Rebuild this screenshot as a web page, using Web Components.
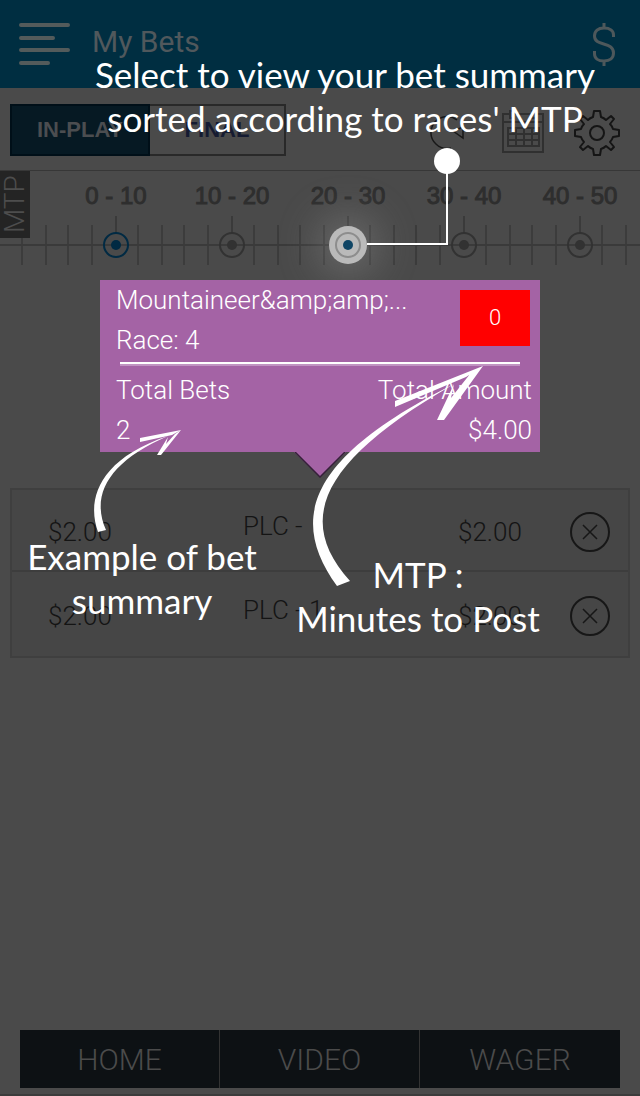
<!DOCTYPE html>
<html lang="en">
<head>
<meta charset="utf-8">
<meta name="viewport" content="width=device-width, initial-scale=1">
<title>My Bets</title>
<style>
  body { margin: 0; background: #4a4a4a; font-family: Roboto, "Liberation Sans", sans-serif; font-weight: 300; }
</style>
</head>
<body>
<bets-screen></bets-screen>
<script>
function define(name, html, setup) {
  const template = document.createElement('template');
  template.innerHTML = html;
  customElements.define(name, class extends HTMLElement {
    connectedCallback() {
      if (this.shadowRoot) return;
      this.attachShadow({ mode: 'open' }).append(template.content.cloneNode(true));
      if (setup) setup(this, this.shadowRoot);
    }
  });
}

define('app-header', `
<style>
  :host { display: flex; align-items: center; height: 88px; box-sizing: border-box; padding: 0 22px 0 18px; background: #002e41; }
  button { display: flex; padding: 0; border: 0; background: none; }
  h1 { flex: 1; margin: 0 0 4px 20px; font-size: 30px; line-height: 36px; font-weight: 400; color: #50585c; }
</style>
<button aria-label="Menu"><svg width="54" height="48" fill="none" stroke="#535b5b" stroke-width="4" stroke-linecap="round"><path d="M3 5H50M3 18H35M3 30H50M3 43H30"/></svg></button>
<h1><slot></slot></h1>
<button aria-label="Balance"><svg width="26" height="48" fill="none" stroke="#4e585b" stroke-width="3"><path d="M12 3V8M12 41V46M21.500 17V15C21.500 11 18 8 12 8S2.500 11 2.500 16C2.500 27 21.500 21 21.500 33C21.500 38 18 41 12 41S2.500 38 2.500 34V31"/></svg></button>
`);

define('bets-toolbar', `
<style>
  :host { display: flex; align-items: center; height: 83px; box-sizing: border-box; padding: 4px 20px 0 10px; border-bottom: 1px solid #373737; }
  .tabs { display: flex; margin-bottom: 2px; }
  .tabs button { box-sizing: border-box; height: 52px; padding: 0; font: bold 22px "Liberation Sans", Arial, sans-serif; border: 2px solid #292929; background: none; color: #151b31; }
  .tabs .on { width: 140px; background: #061923; border-color: #000f18; color: #4b4d50; }
  .tabs .off { width: 136px; border-left: 0; }
  .tools { display: flex; align-items: center; gap: 30px; margin: 4px 0 0 auto; }
  .tools button { display: flex; padding: 0; border: 0; background: none; }
</style>
<div class="tabs"><button class="on">IN-PLAY</button><button class="off">FINAL</button></div>
<div class="tools">
  <button aria-label="Refresh"><svg width="42" height="46" fill="none" stroke="#181818" stroke-width="1.500"><path d="M21 38A16 16 0 1 1 27 10M23 21L33 17V28Z"/></svg></button>
  <button aria-label="Calendar"><svg width="42" height="46" fill="none" stroke="#303030" stroke-width="2"><path d="M8 4H1V42H41V4H34M12 4H30M1 12H41M6 18H37V36H6ZM6 24H37M6 30H37M14 18V36M22 18V36M30 18V36M8 1H12V8H8ZM30 1H34V8H30Z"/></svg></button>
  <button aria-label="Settings"><svg width="46" height="46" viewBox="-23 -23 46 46" fill="none" stroke="#151515" stroke-width="2" stroke-linejoin="round"><circle r="7"/><path d="M-3 -22H3L4 -16Q7 -15 9 -13L14 -17L17 -14L13 -9Q15 -7 16 -4L22 -3V3L16 4Q15 7 13 9L17 14L14 17L9 13Q7 15 4 16L3 22H-3L-4 16Q-7 15 -9 13L-14 17L-17 14L-13 9Q-15 7 -16 4L-22 3V-3L-16 -4Q-15 -7 -13 -9L-17 -14L-14 -17L-9 -13Q-7 -15 -4 -16Z"/></svg></button>
</div>
`);

define('mtp-stop', `
<style>
  :host { display: block; flex: none; width: 116px; }
  label { display: flex; flex-direction: column; align-items: center; font: 24px/28px "Liberation Sans", Arial, sans-serif; color: #2e2e2e; -webkit-text-stroke: 1px #2e2e2e; }
  .major { width: 2px; height: 17px; margin-top: 6px; background: #3a3a3a; }
  .ring { display: grid; place-items: center; width: 38px; height: 38px; margin-top: -7px; border-radius: 50%; color: #323232; }
  input { appearance: none; display: grid; place-items: center; margin: 0; width: 26px; height: 26px; box-sizing: border-box; border: 2px solid; border-radius: 50%; color: inherit; }
  input::before { content: ""; width: 10px; height: 10px; border-radius: 50%; background: currentColor; }
  :host([tone="live"]) .ring { color: #012a43; }
  :host([tone="lit"]) .ring { background: #bababa; color: #8d8d8d; box-shadow: 0 0 40px 10px rgba(160,160,160,.4); }
  :host([tone="lit"]) input::before { background: #0f4565; }
</style>
<label><slot></slot><span class="major"></span><span class="ring"><input type="radio"></span></label>
`, (host, root) => { root.querySelector('input').checked = host.getAttribute('tone') === 'lit'; });

define('mtp-timeline', `
<style>
  :host { display: flex; position: relative; height: 109px; box-sizing: border-box; padding: 11px 0 0 58px; overflow: hidden;
    background:
      linear-gradient(#3a3a3a, #3a3a3a) 0 73px / 100% 2px no-repeat,
      linear-gradient(90deg, transparent 21px, #3c3c3c 21px 23px, transparent 23px 45px, #3c3c3c 45px 47px, transparent 47px 67px, #3c3c3c 67px 69px, transparent 69px 91px, #3c3c3c 91px 93px, transparent 93px) 0 54px / 116px 40px repeat-x; }
  .tab { position: absolute; left: 0; top: 0; width: 30px; height: 67px; display: flex; align-items: center; justify-content: center; background: #242424; color: #4d4d4d; font-size: 28px; line-height: 30px; writing-mode: vertical-rl; transform: rotate(180deg); }
</style>
<span class="tab">MTP</span>
<mtp-stop tone="live">0 - 10</mtp-stop><mtp-stop>10 - 20</mtp-stop><mtp-stop tone="lit">20 - 30</mtp-stop><mtp-stop>30 - 40</mtp-stop><mtp-stop>40 - 50</mtp-stop>
`);

define('bet-summary', `
<style>
  :host { display: block; position: relative; width: 440px; box-sizing: border-box; margin: 0 auto; padding: 0 8px 2px 16px; background: #a463a5; color: #fff; font-size: 26px; line-height: 40px; }
  .top { display: flex; justify-content: space-between; align-items: center; padding-right: 2px; white-space: nowrap; }
  .badge { flex: none; width: 70px; height: 56px; margin-top: -4px; background: #f00; font-size: 22px; line-height: 56px; text-align: center; }
  hr { margin: 2px 12px 4px 4px; height: 2px; border: 0; border-bottom: 2px solid #c193c2; background: #fff; }
  dl { display: flex; justify-content: space-between; margin: 0; }
  dd { margin: 0; }
  .end { text-align: right; }
  svg { position: absolute; left: 194px; top: 100%; }
</style>
<div class="top"><div><div><slot name="track"></slot></div><div><slot name="race"></slot></div></div><div class="badge"><slot name="mtp"></slot></div></div>
<hr>
<dl><div><dt>Total Bets</dt><dd><slot name="bets"></slot></dd></div><div class="end"><dt>Total Amount</dt><dd><slot name="amount"></slot></dd></div></dl>
<svg width="52" height="26"><path d="M0 0H52L26 25Z" fill="#a463a5"/><path d="M1 0L26 25L51 0" fill="none" stroke="#36203a" stroke-width="1.500"/></svg>
`);

define('bet-row', `
<style>
  :host { display: grid; grid-template-columns: 195px 215px 1fr 40px; align-items: center; height: 82px; box-sizing: border-box; padding: 4px 18px 0 36px; border-bottom: 2px solid #3d3d3d; font-size: 26px; line-height: 32px; color: #141414; }
  :host(:last-child) { height: 84px; border-bottom: 0; }
  .pick { padding-bottom: 12px; }
  button { display: flex; padding: 0; border: 0; background: none; }
</style>
<span><slot name="stake"></slot></span><span class="pick"><slot></slot></span><span><slot name="total"></slot></span>
<button aria-label="Cancel bet"><svg width="40" height="40" fill="none" stroke="#171717" stroke-width="2"><circle cx="20" cy="20" r="19"/><path d="M13 13L27 27M27 13L13 27" stroke-width="1.500"/></svg></button>
`);

define('bottom-nav', `
<style>
  :host { display: block; margin: auto 20px 6px; }
  nav { display: grid; grid-template-columns: repeat(3, 1fr); background: #0d1114; }
  a { height: 58px; font-size: 30px; line-height: 60px; text-align: center; text-decoration: none; color: #4b4b4b; }
  a:not(:last-child) { border-right: 1px solid #333; }
</style>
<nav><a href="#home">HOME</a><a href="#video">VIDEO</a><a href="#wager">WAGER</a></nav>
`);

define('coach-marks', `
<style>
  :host { position: absolute; top: 0; left: 0; width: 640px; height: 660px; pointer-events: none; color: #fff; font: 35px/44px "Segoe Print", Lato, sans-serif; text-align: center; }
  svg { position: absolute; inset: 0; }
  p { position: absolute; margin: 0; white-space: nowrap; }
  .pick { left: 85px; top: 52px; width: 520px; }
  .example { left: 22px; top: 534px; width: 240px; }
  .mtp { left: 288px; top: 552px; width: 260px; }
</style>
<svg width="640" height="660" fill="#fff"><circle cx="447" cy="161" r="13"/><path d="M447 161V244H367" fill="none" stroke="#fff" stroke-width="2"/>
<path d="M98 532C87 502 96 460 168 436C110 461 90 494 106 530Z"/>
<path d="M140 438L181 430L172 435L140 442ZM157 455L168 437L166 444L175 434L181 430L161 455Z"/>
<path d="M337 586C289 520 306 458 454 384C324 459 293 518 350 581Z"/>
<path d="M395 401L483 366L466 377L395 407ZM437 420L454 384L451 398L470 374L483 366L444 420Z"/></svg>
<p class="pick">Select to view your bet summary<br>sorted according to races' MTP</p>
<p class="example">Example of bet<br>summary</p>
<p class="mtp">MTP :<br>Minutes to Post</p>
`);

define('bets-screen', `
<style>
  :host { display: flex; flex-direction: column; position: relative; min-height: 100vh; box-sizing: border-box; border-bottom: 2px solid #3c3c3c; overflow: hidden; }
  .list { margin: 36px 10px 24px; border: 2px solid #3f3f3f; background: #464646; }
</style>
<app-header>My Bets</app-header>
<bets-toolbar></bets-toolbar>
<mtp-timeline></mtp-timeline>
<bet-summary><span slot="track">Mountaineer&amp;amp;amp;amp;...</span><span slot="race">Race: 4</span><span slot="mtp">0</span><span slot="bets">2</span><span slot="amount">$4.00</span></bet-summary>
<section class="list">
  <bet-row><span slot="stake">$2.00</span>PLC -<span slot="total">$2.00</span></bet-row>
  <bet-row><span slot="stake">$2.00</span>PLC - 1<span slot="total">$2.00</span></bet-row>
</section>
<bottom-nav></bottom-nav>
<coach-marks></coach-marks>
`.replace('&amp;amp;amp;amp;', '&amp;amp;amp;'));
</script>
</body>
</html>
